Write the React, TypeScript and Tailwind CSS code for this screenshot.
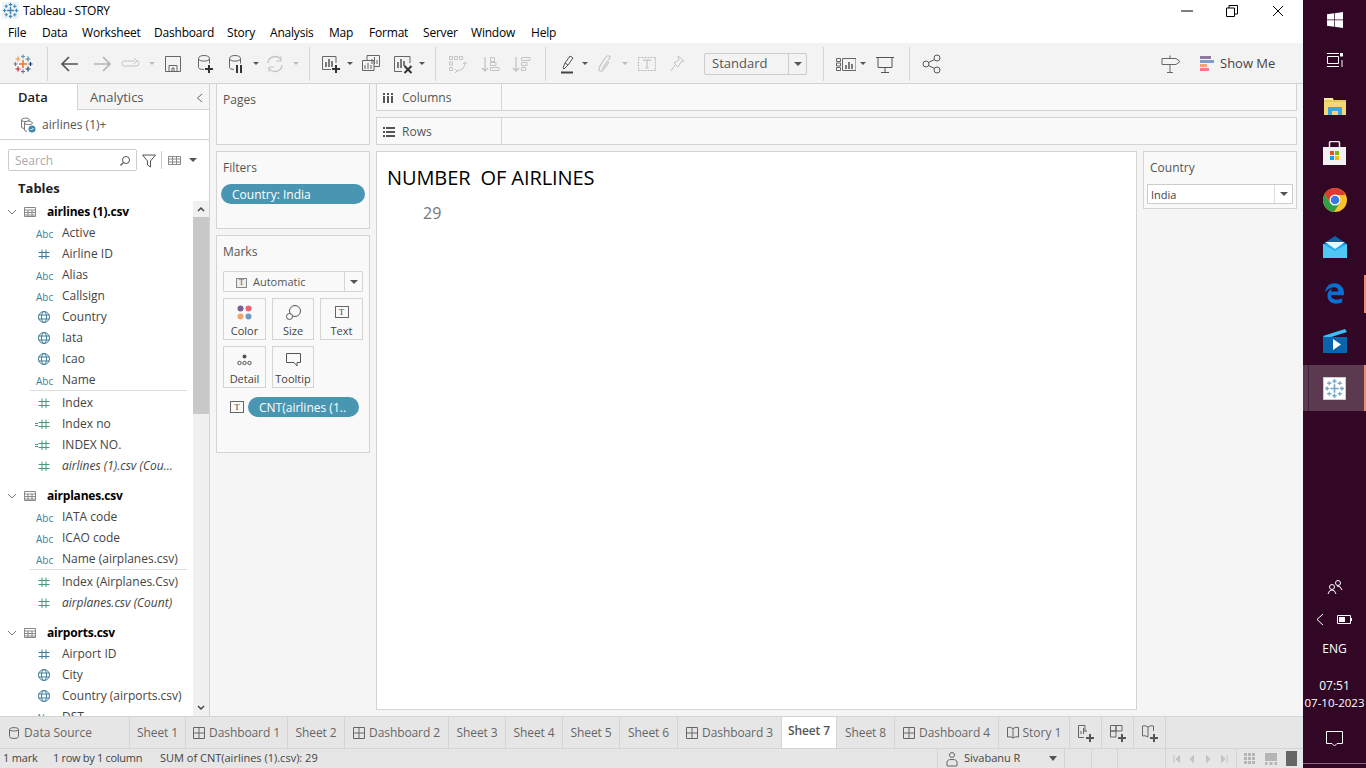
import React from "react";
import { FaEdgeLegacy } from "react-icons/fa";

type IcoProps = {
  className?: string;
  children: React.ReactNode;
  s?: number;
};

function Ico({ className, children, s = 20 }: IcoProps) {
  return (
    <svg
      width={s}
      height={s}
      viewBox={`0 0 ${s} ${s}`}
      fill="none"
      className={`shrink-0 ${className ?? ""}`}
    >
      {children}
    </svg>
  );
}

function Caret({ className, dark }: { className?: string; dark?: boolean }) {
  return (
    <span
      className={`w-0 h-0 shrink-0 border-x-[3px] border-x-transparent border-t-[3px] ${
        dark ? "border-t-[#555]" : "border-t-[#bbb]"
      } ${className ?? ""}`}
    />
  );
}

function Sep({ className }: { className?: string }) {
  return <div className={`w-px h-[34px] bg-[#d4d4d4] shrink-0 ${className ?? ""}`} />;
}

function Cross({ x, y, r, c, w = 1.2 }: { x: number; y: number; r: number; c: string; w?: number }) {
  return <path d={`M${x - r} ${y}H${x + r}M${x} ${y - r}V${y + r}`} stroke={c} strokeWidth={w} />;
}

function Hash({ color, calc }: { color: string; calc?: boolean }) {
  return (
    <svg width="16" height="12" viewBox="0 0 16 12" fill="none">
      <path d="M7 1.5V11M11 1.5V11M3.5 4.5H14.5M3.5 8.5H14.5" stroke={color} />
      {calc && <path d="M0 5.5H3M0 7.5H3" stroke={color} />}
    </svg>
  );
}

function Globe() {
  return (
    <svg width="14" height="14" viewBox="0 0 14 14" fill="none" stroke="#3f7f9b">
      <circle cx="7" cy="7" r="5.5" />
      <ellipse cx="7" cy="7" rx="2.5" ry="5.5" />
      <path d="M1.5 5H12.5M1.5 9H12.5" />
    </svg>
  );
}

function TIcon({ className, s = 14 }: { className?: string; s?: number }) {
  return (
    <span
      className={`shrink-0 flex items-center justify-center border border-[#666] text-[9px] leading-none font-['Liberation_Serif',serif] text-[#444] ${className ?? ""}`}
      style={{ width: s, height: s - 2 }}
    >
      T
    </span>
  );
}

type Field = { t: "abc" | "num" | "geo" | "meas" | "calc"; n: string; i?: boolean };

function FieldRow({ t, n, i }: Field) {
  return (
    <div className="h-[21px] flex items-center">
      <div className="w-[62px] pl-[36px] flex items-center">
        {t === "abc" && <span className="text-[10px] pt-[3px] font-medium text-[#3f7f9b] w-[17px] text-center">Abc</span>}
        {t === "num" && <span className="ml-[-1px]"><Hash color="#3a7a96" /></span>}
        {t === "geo" && <span className="ml-[1px]"><Globe /></span>}
        {t === "meas" && <span className="ml-[-1px]"><Hash color="#3f9c80" /></span>}
        {t === "calc" && <span className="ml-[-1px]"><Hash color="#3f9c80" calc /></span>}
      </div>
      <span className={`text-[12px] pt-[1px] whitespace-nowrap text-[#444] ${i ? "italic" : ""}`}>{n}</span>
    </div>
  );
}

function TableHead({ n }: { n: string }) {
  return (
    <div className="h-[21px] flex items-center">
      <svg width="10" height="6" viewBox="0 0 10 6" fill="none" className="ml-[7px]">
        <path d="M1 1L5 5L9 1" stroke="#777" />
      </svg>
      <svg width="12" height="10" viewBox="0 0 12 10" fill="none" stroke="#888" className="ml-[7px]">
        <path d="M.5.5H11.5V9.5H.5ZM.5 3H11.5M.5 5.5H11.5M.5 8H11.5M4 3V9.5M8 3V9.5" />
      </svg>
      <span className="ml-[11px] text-[12px] pt-[1px] font-bold tracking-[-0.2px] text-black whitespace-nowrap">{n}</span>
    </div>
  );
}

const airlinesDims: Field[] = [
  { t: "abc", n: "Active" },
  { t: "num", n: "Airline ID" },
  { t: "abc", n: "Alias" },
  { t: "abc", n: "Callsign" },
  { t: "geo", n: "Country" },
  { t: "geo", n: "Iata" },
  { t: "geo", n: "Icao" },
  { t: "abc", n: "Name" },
];
const airlinesMeas: Field[] = [
  { t: "meas", n: "Index" },
  { t: "calc", n: "Index no" },
  { t: "calc", n: "INDEX NO." },
  { t: "meas", n: "airlines (1).csv (Cou...", i: true },
];
const planesDims: Field[] = [
  { t: "abc", n: "IATA code" },
  { t: "abc", n: "ICAO code" },
  { t: "abc", n: "Name (airplanes.csv)" },
];
const planesMeas: Field[] = [
  { t: "meas", n: "Index (Airplanes.Csv)" },
  { t: "meas", n: "airplanes.csv (Count)", i: true },
];
const airportsDims: Field[] = [
  { t: "num", n: "Airport ID" },
  { t: "geo", n: "City" },
  { t: "geo", n: "Country (airports.csv)" },
  { t: "abc", n: "DST" },
];

const menus = [
  { n: "File", w: "w-[34px]" },
  { n: "Data", w: "w-[40px]" },
  { n: "Worksheet", w: "w-[72px]" },
  { n: "Dashboard", w: "w-[73px]" },
  { n: "Story", w: "w-[43px]" },
  { n: "Analysis", w: "w-[59px]" },
  { n: "Map", w: "w-[40px]" },
  { n: "Format", w: "w-[54px]" },
  { n: "Server", w: "w-[48px]" },
  { n: "Window", w: "w-[60px]" },
  { n: "Help", w: "w-[40px]" },
];

function DashIcon() {
  return (
    <svg width="12" height="12" viewBox="0 0 12 12" fill="none" stroke="#666" className="mr-[4px] shrink-0">
      <path d="M.5.5H11.5V11.5H.5ZM6 .5V11.5M.5 6H11.5" />
    </svg>
  );
}

const tabs = [
  { n: "Sheet 1", w: "w-[56px]" },
  { n: "Dashboard 1", w: "w-[102px]", d: true },
  { n: "Sheet 2", w: "w-[57px]" },
  { n: "Dashboard 2", w: "w-[104px]", d: true },
  { n: "Sheet 3", w: "w-[57px]" },
  { n: "Sheet 4", w: "w-[57px]" },
  { n: "Sheet 5", w: "w-[57px]" },
  { n: "Sheet 6", w: "w-[58px]" },
  { n: "Dashboard 3", w: "w-[104px]", d: true },
  { n: "Sheet 7", w: "w-[55px]", on: true },
  { n: "Sheet 8", w: "w-[58px]" },
  { n: "Dashboard 4", w: "w-[104px]", d: true },
];

function Tableau({ c = "#3f86b5" }: { c?: string }) {
  return (
    <>
      <Cross x={10} y={10} r={4} c={c} w={1.6} />
      <Cross x={10} y={3} r={2} c={c} w={1.4} />
      <Cross x={10} y={17} r={2} c={c} w={1.4} />
      <Cross x={3} y={10} r={2} c={c} w={1.4} />
      <Cross x={17} y={10} r={2} c={c} w={1.4} />
      <Cross x={5} y={5} r={2} c={c} w={1.2} />
      <Cross x={15} y={5} r={2} c={c} w={1.2} />
      <Cross x={5} y={15} r={2} c={c} w={1.2} />
      <Cross x={15} y={15} r={2} c={c} w={1.2} />
    </>
  );
}

function Toolbar() {
  return (
    <div className="h-[42px] pt-[1px] bg-[#f3f3f3] border-b border-[#d4d4d4] flex items-center">
      <Ico className="ml-[13px]">
        <Cross x={10} y={10} r={4} c="#e8762d" w={1.5} />
        <Cross x={10} y={2.5} r={2} c="#5b9bb5" />
        <Cross x={10} y={17.5} r={2} c="#6f6fa8" />
        <Cross x={2.500} y={10} r={2} c="#5b879b" />
        <Cross x={17.500} y={10} r={2} c="#1f447a" />
        <Cross x={5} y={5} r={2.500} c="#eb9a4f" />
        <Cross x={15} y={5} r={2.500} c="#5b879b" />
        <Cross x={5} y={15} r={2.500} c="#c72035" />
        <Cross x={15} y={15} r={2.500} c="#1f447a" />
      </Ico>
      <Sep className="ml-[14px]" />
      <Ico className="ml-[12px]">
        <path d="M2 10H18M9 3L2 10L9 17" stroke="#555" strokeWidth="1.7" />
      </Ico>
      <Ico className="ml-[12px]">
        <path d="M2 10H18M11 3L18 10L11 17" stroke="#b5b5b5" strokeWidth="1.7" />
      </Ico>
      <Ico className="ml-[9px]">
        <path d="M14 7H3Q1 7 1 9.500Q1 12 3 12H15Q18 12 18 9.500Q18 7 16 7M13 4L16 7L13 10" stroke="#c4c4c4" />
      </Ico>
      <Caret className="ml-[8px]" />
      <Ico className="ml-[8px]">
        <path d="M2.500 2.500H17.500V17.500H2.500ZM6 17.500V11.500H14V17.500M9 14H11V17.500H9Z" stroke="#666" />
      </Ico>
      <Ico className="ml-[12px]">
        <path d="M3.500 4.500V13.500Q3.500 15.500 9 15.500M14.500 4.500V9.500M3.500 4.500C3.500 .5 14.500 .5 14.500 4.500C14.500 8 3.500 8 3.500 4.500Z" stroke="#666" />
        <path d="M10 15H18M14 11V19" stroke="#333" strokeWidth="2" />
      </Ico>
      <Ico className="ml-[11px]">
        <path d="M3.500 4.500V13.500Q3.500 15.500 8 15.500M14.500 4.500V9.500M3.500 4.500C3.500 .5 14.500 .5 14.500 4.500C14.500 8 3.500 8 3.500 4.500Z" stroke="#666" />
        <path d="M11 11V19M15 11V19" stroke="#333" strokeWidth="2" />
      </Ico>
      <Caret className="ml-[7px]" dark />
      <Ico className="ml-[6px]">
        <path d="M3 9A7 7 0 0 1 16 6M17 11A7 7 0 0 1 4 14" stroke="#c4c4c4" strokeWidth="1.300" />
        <path d="M16 2V7H11M4 18V13H9" stroke="#c4c4c4" />
      </Ico>
      <Caret className="ml-[8px]" />
      <Sep className="ml-[10px]" />
      <Ico className="ml-[11px]">
        <path d="M15 9V2.500H1.500V15.500H10" stroke="#666" />
        <path d="M5 8V13M8 5V13M11 7V13" stroke="#555" strokeWidth="1.500" />
        <path d="M11 15H19M15 11V19" stroke="#333" strokeWidth="2" />
      </Ico>
      <Caret className="ml-[6px]" dark />
      <Ico className="ml-[8px]">
        <path d="M6 6V1.500H18.500V12.500H13" stroke="#666" />
        <path d="M1.500 6.500H13V16.500H1.500Z" fill="#f3f3f3" stroke="#666" />
        <path d="M11 5V10M13.500 3V10M16 6V10M4 11V15M7 9V15M10 11V15" stroke="#666" />
      </Ico>
      <Ico className="ml-[12px]">
        <path d="M17 9V2.500H1.500V17.500H9" stroke="#666" />
        <path d="M5 8V14M8 5V14M11 7V12" stroke="#555" strokeWidth="1.500" />
        <path d="M11.500 12L18.500 19M18.500 12L11.500 19" stroke="#333" strokeWidth="2" />
      </Ico>
      <Caret className="ml-[6px]" dark />
      <Sep className="ml-[10px]" />
      <Ico className="ml-[11px]">
        <path d="M2.500 2.500H5.500V5.500H2.500ZM7.500 2.500H10.500V5.500H7.500ZM12.500 2.500H15.500V5.500H12.500ZM2.500 8H5.500V11H2.500ZM2.500 13.500H5.500V16.500H2.500Z" stroke="#c4c4c4" />
        <path d="M18 8Q18 16 10 17M8 15L10 17L8 19M16 10L18 8L20 10" stroke="#c4c4c4" />
      </Ico>
      <Ico className="ml-[13px]">
        <path d="M5 3V17M2 14L5 17L8 14" stroke="#c4c4c4" strokeWidth="1.300" />
        <path d="M10.500 3.500H14.500V7.500H10.500ZM10.500 8.500H16V11.500H10.500ZM10.500 13.500H19V16.500H10.500Z" stroke="#c4c4c4" />
      </Ico>
      <Ico className="ml-[11px]">
        <path d="M5 3V17M2 14L5 17L8 14" stroke="#c4c4c4" strokeWidth="1.300" />
        <path d="M10.500 3.500H19V6.500H10.500ZM10.500 8.500H16V11.500H10.500ZM10.500 13.500H14.500V16.500H10.500Z" stroke="#c4c4c4" />
      </Ico>
      <Sep className="ml-[14px]" />
      <Ico className="ml-[12px]">
        <path d="M5 14L7 9L12 2L15 4L10 11L6 15ZM7 9L10 11" stroke="#555" />
        <path d="M3 18.500H15" stroke="#444" strokeWidth="2" />
      </Ico>
      <Caret className="ml-[4px]" dark />
      <Ico className="ml-[7px]">
        <path d="M7 15L14 5Q16 2 14 2Q12 1 10 4L5 12Q3 16 5 17Q7 18 9 15L14 8" stroke="#c4c4c4" strokeWidth="1.200" />
      </Ico>
      <Caret className="ml-[7px]" />
      <Ico className="ml-[9px]">
        <path d="M1.500 3.500H18.500V16.500H1.500Z" stroke="#bbb" strokeDasharray="2 1" />
        <path d="M6.500 7V6H13.500V7M10 6V14M8.500 14H11.500" stroke="#bbb" />
      </Ico>
      <Ico className="ml-[10px]">
        <path d="M11 2L17 7L14 8L11 13L7 9L12 6ZM8 11L4 17" stroke="#c4c4c4" />
      </Ico>
      <div className="ml-[17px] w-[103px] h-[22px] border border-[#ccc] rounded-[2px] flex items-center shrink-0">
        <span className="flex-1 pl-[7px] text-[13px] text-[#555]">Standard</span>
        <span className="w-[18px] h-full border-l border-[#ccc] flex items-center justify-center">
          <Caret className="border-x-[4px] border-t-[4px]" dark />
        </span>
      </div>
      <Sep className="ml-[16px]" />
      <Ico className="ml-[12px]">
        <path d="M.5 4.500H4.500V7.500H.5ZM.5 9H4.500V12H.5ZM.5 13.500H4.500V16.500H.5ZM6.500 4.500H20V16.500H6.500Z" stroke="#666" />
        <path d="M10 11V15M13 8V15M16 10V15" stroke="#555" strokeWidth="1.500" />
      </Ico>
      <Caret className="ml-[4px]" dark />
      <Ico className="ml-[9px]">
        <path d="M1 3.500H19M3 3.500V13.500H17V3.500M10 13.500V18M6 18.500H14" stroke="#555" />
      </Ico>
      <Sep className="ml-[14px]" />
      <Ico className="ml-[12px]">
        <circle cx="4" cy="10" r="3" stroke="#555" />
        <circle cx="15" cy="4" r="3" stroke="#555" />
        <circle cx="15" cy="16" r="3" stroke="#555" />
        <path d="M6.500 8.500L12.500 5.500M6.500 11.500L12.500 14.500" stroke="#555" />
      </Ico>
      <Ico className="ml-[219px]" s={20}>
        <path d="M1 4.500H15L19 7.500L15 10.500H1ZM9 1.500V4.500M9 10.500V18M6 18.500H12" stroke="#666" />
      </Ico>
      <div className="ml-[19px] flex flex-col gap-[1px] shrink-0">
        <span className="w-[11px] h-[3px] bg-[#8d7aa3]" />
        <span className="w-[14px] h-[3px] bg-[#7b9fc9]" />
        <span className="w-[7px] h-[3px] bg-[#f4a46c]" />
        <span className="w-[9px] h-[3px] bg-[#f27a85]" />
      </div>
      <span className="ml-[6px] text-[13px] text-[#444] whitespace-nowrap">Show Me</span>
    </div>
  );
}

function LeftPanel() {
  return (
    <div className="w-[210px] shrink-0 bg-white border-r border-[#d4d4d4] flex flex-col h-full">
      <div className="h-[26px] flex shrink-0">
        <div className="w-[77px] flex items-center pl-[18px] pt-[2px] text-[13px] font-semibold text-[#222]">Data</div>
        <div className="flex-1 flex items-center bg-[#f5f5f5] border-l border-b border-[#d4d4d4] pl-[12px] pt-[2px] text-[13px] text-[#555]">
          Analytics
          <svg width="7" height="10" viewBox="0 0 7 10" fill="none" className="ml-auto mr-[6px]">
            <path d="M6 1L1.500 5L6 9" stroke="#666" />
          </svg>
        </div>
      </div>
      <div className="h-[30px] shrink-0 border-b border-[#d4d4d4] flex items-center pl-[20px] text-[12px] text-[#555]">
        <svg width="16" height="16" viewBox="0 0 16 16" fill="none" className="mr-[6px]">
          <path d="M1.500 3V10Q1.500 11 4 11.500M1.500 3C1.500 .5 9.500 .5 9.500 3C9.500 5 1.500 5 1.500 3Z" stroke="#777" />
          <path d="M4.500 6V13Q4.500 14 7 14.500M4.500 6C4.500 3.500 12.500 3.500 12.500 6C12.500 8 4.500 8 4.500 6Z" stroke="#777" fill="#fff" />
          <circle cx="12" cy="12" r="3.500" fill="#3f8bb0" />
          <path d="M10.500 12L11.500 13L13.500 11" stroke="#fff" />
        </svg>
        airlines (1)+
      </div>
      <div className="h-[35px] shrink-0 flex items-end pb-[4px] pl-[8px]">
        <div className="w-[129px] h-[22px] border border-[#ccc] rounded-[2px] flex items-center pl-[6px] pt-[1px] text-[12px] text-[#aaa]">
          Search
          <svg width="12" height="12" viewBox="0 0 12 12" fill="none" className="ml-auto mr-[5px]">
            <circle cx="7" cy="5" r="3.500" stroke="#555" />
            <path d="M4.500 7.500L1.500 10.500" stroke="#555" strokeWidth="1.300" />
          </svg>
        </div>
        <svg width="14" height="14" viewBox="0 0 14 14" fill="none" className="ml-[5px] mb-[3px]">
          <path d="M.5 1H13.500L8.500 7V13L5.500 11V7Z" stroke="#555" />
        </svg>
        <span className="w-px h-[18px] bg-[#ccc] ml-[5px] mb-[2px]" />
        <svg width="13" height="9" viewBox="0 0 13 9" fill="none" className="ml-[6px] mb-[6px]">
          <path d="M.5.5H12.500V8.500H.5ZM.5 3H12.500M.5 6H12.500M4.500.5V8.500M8.500.5V8.500" stroke="#888" />
        </svg>
        <Caret className="ml-[8px] mb-[9px] border-x-[4px] border-t-[4px]" dark />
      </div>
      <div className="h-[26px] shrink-0 flex items-center pl-[18px] pt-[2px] text-[13px] font-bold text-[#222]">Tables</div>
      <div className="flex-1 min-h-0 flex">
        <div className="w-[193px] overflow-hidden">
          <TableHead n="airlines (1).csv" />
          {airlinesDims.map((f) => <FieldRow key={f.n} {...f} />)}
          <div className="h-[2px] ml-[30px] mr-[6px] border-t border-[#ddd]" />
          {airlinesMeas.map((f) => <FieldRow key={f.n} {...f} />)}
          <div className="h-[9px]" />
          <TableHead n="airplanes.csv" />
          {planesDims.map((f) => <FieldRow key={f.n} {...f} />)}
          <div className="h-[2px] ml-[30px] mr-[6px] border-t border-[#ddd]" />
          {planesMeas.map((f) => <FieldRow key={f.n} {...f} />)}
          <div className="h-[9px]" />
          <TableHead n="airports.csv" />
          {airportsDims.map((f) => <FieldRow key={f.n} {...f} />)}
        </div>
        <div className="w-[16px] bg-[#f0f0f0] flex flex-col">
          <div className="h-[16px] flex items-center justify-center">
            <svg width="8" height="6" viewBox="0 0 8 6" fill="none"><path d="M1 5L4 2L7 5" stroke="#444" strokeWidth="1.500" /></svg>
          </div>
          <div className="h-[197px] bg-[#c8c8c8]" />
          <div className="mt-auto h-[16px] flex items-center justify-center">
            <svg width="8" height="6" viewBox="0 0 8 6" fill="none"><path d="M1 1L4 4L7 1" stroke="#444" strokeWidth="1.500" /></svg>
          </div>
        </div>
      </div>
    </div>
  );
}

function MarkBtn({ label, children }: { label: string; children: React.ReactNode }) {
  return (
    <div className="h-[42px] border border-[#d4d4d4] flex flex-col items-center pt-[5px]">
      <div className="h-[17px] flex items-center justify-center">{children}</div>
      <span className="text-[11px] leading-[16px] mt-[3px] text-[#444]">{label}</span>
    </div>
  );
}

function Cards() {
  return (
    <div className="w-[154px] shrink-0 flex flex-col gap-[6px] h-full">
      <div className="h-[61px] border border-t-0 border-[#d4d4d4] bg-[#f9f9f9] px-[6px] pt-[7px] text-[12px] text-[#555]">Pages</div>
      <div className="h-[78px] border border-[#d4d4d4] bg-[#f9f9f9] px-[4px]">
        <div className="pl-[2px] pt-[7px] h-[32px] text-[12px] text-[#555]">Filters</div>
        <div className="h-[20px] w-[144px] rounded-full bg-[#4996b2] text-white text-[12px] pt-[1px] flex items-center pl-[11px]">Country: India</div>
      </div>
      <div className="h-[218px] border border-[#d4d4d4] bg-[#f9f9f9] px-[6px]">
        <div className="pt-[7px] h-[35px] text-[12px] text-[#555]">Marks</div>
        <div className="h-[21px] w-[140px] border border-[#d4d4d4] rounded-[1px] flex items-center">
          <span className="flex-1 flex items-center pl-[12px] pt-[2px] text-[11px] text-[#555]">
            <span className="w-[11px] h-[10px] border border-[#888] bg-[#eee] text-[8px] leading-[8px] text-center font-['Liberation_Serif',serif] mr-[6px]">T</span>
            Automatic
          </span>
          <span className="w-[18px] h-full border-l border-[#d4d4d4] flex items-center justify-center">
            <Caret className="border-x-[4px] border-t-[4px]" dark />
          </span>
        </div>
        <div className="grid grid-cols-[43px_42px_43px] gap-x-[6px] gap-y-[6px] mt-[6px] w-[140px]">
          <MarkBtn label="Color">
            <svg width="15" height="15" viewBox="0 0 15 15">
              <circle cx="3.500" cy="3.500" r="3" fill="#7b5f93" />
              <circle cx="11.500" cy="3.500" r="3" fill="#f0616f" />
              <circle cx="3.500" cy="11.500" r="3" fill="#f4a46c" />
              <circle cx="11.500" cy="11.500" r="3" fill="#7299c6" />
            </svg>
          </MarkBtn>
          <MarkBtn label="Size">
            <svg width="15" height="15" viewBox="0 0 15 15" fill="none" stroke="#555">
              <circle cx="9" cy="6" r="5.500" />
              <circle cx="3.500" cy="11.500" r="3" fill="#f9f9f9" />
            </svg>
          </MarkBtn>
          <MarkBtn label="Text">
            <TIcon s={14} />
          </MarkBtn>
          <MarkBtn label="Detail">
            <svg width="15" height="12" viewBox="0 0 15 12" fill="none">
              <circle cx="7.500" cy="2.500" r="2" fill="#555" />
              <circle cx="2.500" cy="9" r="1.700" stroke="#555" />
              <circle cx="7.500" cy="9" r="1.700" stroke="#555" />
              <circle cx="12.500" cy="9" r="1.700" stroke="#555" />
            </svg>
          </MarkBtn>
          <MarkBtn label="Tooltip">
            <svg width="15" height="14" viewBox="0 0 15 14" fill="none">
              <path d="M.5.5H14.500V9.500H11V13L8 9.500H.5Z" stroke="#555" />
            </svg>
          </MarkBtn>
        </div>
        <div className="flex items-center mt-[9px]">
          <TIcon className="ml-[7px]" s={14} />
          <div className="ml-[4px] w-[111px] h-[20px] rounded-full bg-[#4996b2] text-white text-[12px] pt-[1px] flex items-center pl-[11px] whitespace-nowrap">CNT(airlines (1..</div>
        </div>
      </div>
    </div>
  );
}

function Shelf({ label, icon, h, top }: { label: string; icon: React.ReactNode; h: string; top?: boolean }) {
  return (
    <div className={`${h} shrink-0 border border-[#d4d4d4] bg-[#f9f9f9] flex ${top ? "border-t-0" : ""}`}>
      <div className="w-[125px] border-r border-[#d4d4d4] flex items-center pl-[6px] pt-[1px] text-[12px] text-[#555]">
        <span className="w-[19px] flex items-center">{icon}</span>
        {label}
      </div>
    </div>
  );
}

function Tabs() {
  return (
    <div className="h-[32px] shrink-0 bg-[#e6e6e6] border-t border-[#d4d4d4] flex text-[12px] text-[#666]">
      <div className="w-[130px] border-r border-[#d4d4d4] flex items-center pl-[9px]">
        <svg width="10" height="12" viewBox="0 0 10 12" fill="none" stroke="#666" className="mr-[5px]">
          <path d="M.5 2.500V9.500Q.5 11.500 5 11.500Q9.500 11.500 9.500 9.500V2.500C9.500 0 .5 0 .5 2.500C.5 4.500 9.500 4.500 9.500 2.500" />
        </svg>
        Data Source
      </div>
      {tabs.map((t) => (
        <div
          key={t.n}
          className={`${t.w} shrink-0 border-r border-[#d4d4d4] flex items-center justify-center whitespace-nowrap tracking-[-0.1px] ${
            t.on ? "bg-white font-semibold text-[#555] pb-[3px]" : ""
          }`}
        >
          {t.d && <DashIcon />}
          {t.n}
        </div>
      ))}
      <div className="w-[71px] shrink-0 border-r border-[#d4d4d4] flex items-center justify-center whitespace-nowrap">
        <svg width="12" height="13" viewBox="0 0 12 13" fill="none" stroke="#666" className="mr-[4px]">
          <path d="M6 2.500Q3 .5.5 1.500V11Q3 10 6 12Q9 10 11.500 11V1.500Q9 .5 6 2.500ZM6 2.500V12" />
        </svg>
        Story 1
      </div>
      {[
        "M8 8V1.500H1.500V13.500H7M4 10V7M6.500 10V4M9 8V6",
        "M7 1.500H13V7H7ZM1.500 1.500H7V7H1.500ZM1.500 7H7V13H1.500Z",
        "M7 3Q4 1 1.500 2V12Q4 11 7 13M7 3Q10 1 12.500 2V7M7 3V13",
      ].map((d) => (
        <div key={d} className="w-[32px] shrink-0 border-r border-[#d4d4d4] flex items-center justify-center">
          <svg width="18" height="18" viewBox="0 0 18 18" fill="none">
            <path d={d} stroke="#666" />
            <path d="M9 14H17M13 10V18" stroke="#555" strokeWidth="2" />
          </svg>
        </div>
      ))}
    </div>
  );
}

function StatusBar() {
  return (
    <div className="h-[20px] shrink-0 bg-[#e6e6e6] border-t border-[#d4d4d4] flex items-center text-[11px] text-[#444]">
      <span className="ml-[3px] w-[50px] tracking-[-0.2px]">1 mark</span>
      <span className="w-[107px] tracking-[-0.3px]">1 row by 1 column</span>
      <span className="w-[777px] whitespace-nowrap">SUM of CNT(airlines (1).csv): 29</span>
      <div className="h-full w-[127px] border-l border-[#d4d4d4] flex items-center">
        <svg width="12" height="16" viewBox="0 0 12 16" fill="none" stroke="#666" className="ml-[8px]">
          <circle cx="6" cy="4" r="2.500" />
          <path d="M1 15V11Q1 8.500 6 8.500Q11 8.500 11 11V15Z" />
        </svg>
        <span className="ml-[6px] flex-1">Sivabanu R</span>
        <Caret className="border-x-[4px] border-t-[5px] border-t-[#111] mr-[7px]" dark />
      </div>
      <div className="h-full w-[27px] border-l border-[#d4d4d4]" />
      <div className="h-full w-[26px] border-l border-[#d4d4d4]" />
      <div className="h-full w-[48px] border-l border-[#d4d4d4]" />
      <div className="h-full w-[71px] border-l border-[#d4d4d4] flex items-center pl-[7px] gap-[9px]">
        {["M1 1V9M7 1L3 5L7 9", "M5 1L1 5L5 9", "M1 1L5 5L1 9", "M6 1V9M0 1L4 5L0 9"].map((d) => (
          <svg key={d} width="7" height="10" viewBox="0 0 7 10"><path d={d} stroke="#c4c4c4" fill="#c4c4c4" /></svg>
        ))}
      </div>
      <div className="h-full flex-1 border-l border-[#d4d4d4] flex items-center pl-[7px] gap-[9px]">
        <svg width="12" height="12" viewBox="0 0 12 12" fill="#b5b5b5">
          <path d="M0 0H3V3H0ZM4 0H7V3H4ZM8 0H11V3H8ZM0 4H3V7H0ZM4 4H7V7H4ZM8 4H11V7H8ZM0 8H3V11H0ZM4 8H7V11H4ZM8 8H11V11H8Z" />
        </svg>
        <svg width="12" height="12" viewBox="0 0 12 12" fill="#b5b5b5"><path d="M0 0H12V8H0ZM0 9H2.500V12H0ZM4.500 9H7.500V12H4.500ZM9.500 9H12V12H9.500Z" /></svg>
        <span className="w-[11px] h-[15px] bg-[#666]" />
      </div>
    </div>
  );
}

function Taskbar() {
  return (
    <div className="w-[63px] shrink-0 h-full bg-[#310725] flex flex-col items-stretch text-white">
      <div className="h-[40px] flex items-center justify-center">
        <svg width="16" height="16" viewBox="0 0 16 16" fill="#fff">
          <path d="M0 2.300L7 1.300V7.600H0ZM7.700 1.200L16 0V7.600H7.700ZM0 8.300H7V14.700L0 13.700ZM7.700 8.300H16V16L7.700 14.800Z" />
        </svg>
      </div>
      <div className="h-[39px] flex items-center justify-center">
        <svg width="16" height="16" viewBox="0 0 16 16" fill="none" stroke="#fff">
          <path d="M.5 4.500H11.500V11.500H.5ZM0 1.500H12M0 14.500H12M15 8V15" />
          <path d="M13 1H16V4.500H13Z" fill="#fff" stroke="none" />
        </svg>
      </div>
      <div className="mt-[3px] h-[47px] flex items-center justify-center">
        <svg width="22" height="18" viewBox="0 0 22 18">
          <path d="M0 1H8L10 3H22V18H0Z" fill="#f5d67a" />
          <path d="M0 3H9V1H0Z" fill="#fbeaa8" />
          <path d="M4 18V10H18V18H14V14H8V18Z" fill="#39a8e0" />
          <path d="M0 4H22" stroke="#d9b65a" />
        </svg>
      </div>
      <div className="h-[47px] flex items-center justify-center">
        <svg width="23" height="24" viewBox="0 0 23 24" fill="none">
          <path d="M0 6H23V24H0Z" fill="#f2f2f2" />
          <path d="M6.500 6V2Q6.500 .5 8 .5H15Q16.500 .5 16.500 2V6" stroke="#e8e8e8" strokeWidth="1.500" />
          <path d="M7 10H11V14H7Z" fill="#f25022" />
          <path d="M12 10H16V14H12Z" fill="#7fba00" />
          <path d="M7 15H11V19H7Z" fill="#00a4ef" />
          <path d="M12 15H16V19H12Z" fill="#ffb900" />
        </svg>
      </div>
      <div className="h-[47px] flex items-center justify-center">
        <svg width="24" height="24" viewBox="0 0 24 24">
          <circle cx="12" cy="12" r="12" fill="#fbc02d" />
          <path d="M12 0A12 12 0 0 0 1.600 6L7 15L12 7H22.400A12 12 0 0 0 12 0Z" fill="#dd3b2f" />
          <path d="M1.600 6A12 12 0 0 0 11 24L16 16L7 15Z" fill="#2f9e44" />
          <circle cx="12" cy="12" r="5.500" fill="#fff" />
          <circle cx="12" cy="12" r="4.300" fill="#3b78e7" />
        </svg>
      </div>
      <div className="h-[47px] flex items-center justify-center">
        <svg width="24" height="22" viewBox="0 0 24 22">
          <path d="M0 8L12 0L24 8V22H0Z" fill="#0a64ad" />
          <path d="M0 8H24V22H0Z" fill="#28a8ea" />
          <path d="M0 8L12 15L24 8V22H0Z" fill="#50c8f5" />
          <path d="M2 6H22L12 13Z" fill="#e9f6fd" />
        </svg>
      </div>
      <div className="h-[46px] relative flex items-center justify-center">
        <FaEdgeLegacy className="w-[21px] h-[21px] text-[#0a6ed1]" />
        <span className="absolute right-0 top-[5px] w-[2px] h-[38px] bg-[#f28b6a]" />
      </div>
      <div className="h-[49px] flex items-center justify-center">
        <svg width="24" height="24" viewBox="0 0 24 24">
          <path d="M0 7L22 0L24 3L2 10Z" fill="#35c1f1" />
          <path d="M0 8H24V24H0Z" fill="#0a64ad" />
          <path d="M10 10L18 15.500L10 21Z" fill="#fff" />
        </svg>
      </div>
      <div className="h-[46px] relative bg-[#5b3a50] flex items-center justify-center">
        <span className="absolute left-[5px] top-0 w-px h-full bg-[#3f2138]" />
        <span className="absolute right-0 top-0 w-[2px] h-full bg-[#f28b6a]" />
        <svg width="23" height="23" viewBox="0 0 20 20" className="bg-white border border-[#ccc]">
          <Tableau c="#7aa8c8" />
        </svg>
      </div>
      <div className="mt-[165px] h-[22px] flex items-center justify-center">
        <svg width="16" height="16" viewBox="0 0 16 16" fill="none" stroke="#fff">
          <circle cx="5" cy="8" r="2.500" />
          <circle cx="11" cy="4" r="2.500" />
          <path d="M1 15Q2 11 5 11Q8 11 9 15M10 7Q14 7 15 11" />
        </svg>
      </div>
      <div className="mt-[10px] h-[22px] flex items-center">
        <svg width="8" height="13" viewBox="0 0 8 13" fill="none" className="ml-[13px]">
          <path d="M7 1L1 6.500L7 12" stroke="#fff" />
        </svg>
        <svg width="15" height="9" viewBox="0 0 15 9" fill="none" className="ml-[13px]">
          <path d="M.5.5H13.500V8.500H.5Z" stroke="#fff" />
          <path d="M2 2H8V7H2ZM14 3H15V6H14Z" fill="#fff" />
        </svg>
      </div>
      <div className="mt-[9px] text-center text-[12px] leading-[20px]">ENG</div>
      <div className="mt-[18px] text-center text-[12px] leading-[17px]">07:51</div>
      <div className="text-center text-[11.500px] leading-[17px] whitespace-nowrap">07-10-2023</div>
      <div className="mt-[20px] flex justify-center">
        <svg width="17" height="16" viewBox="0 0 17 16" fill="none">
          <path d="M.5.5H16.500V12.500H11L8.500 15L6 12.500H.5Z" stroke="#fff" />
        </svg>
      </div>
      <div className="mt-[16px] h-px bg-[#8a6a80]" />
    </div>
  );
}

export default function App() {
  return (
    <div className="w-[1366px] h-[768px] overflow-hidden flex font-['Open_Sans',sans-serif] bg-white">
      <div className="w-[1303px] shrink-0 flex flex-col h-full">
        <div className="h-[21px] shrink-0 flex items-center">
          <svg width="17" height="17" viewBox="0 0 20 20" className="ml-[2px] bg-[#eef3f7]">
            <Tableau />
          </svg>
          <span className="ml-[4px] w-[92px] text-[12px] tracking-[-0.3px] text-black whitespace-nowrap">Tableau - STORY</span>
          <svg width="14" height="14" viewBox="0 0 14 14" fill="none" className="ml-[1066px]">
            <path d="M0 7H12" stroke="#000" />
          </svg>
          <svg width="12" height="12" viewBox="0 0 12 12" fill="none" stroke="#000" className="ml-[31px]">
            <path d="M.5 3H8.500V11.500H.5ZM3 3V.5H11.500V9H8.500" />
          </svg>
          <svg width="12" height="12" viewBox="0 0 12 12" fill="none" stroke="#000" className="ml-[34px]">
            <path d="M1 1L11 11M11 1L1 11" />
          </svg>
        </div>
        <div className="h-[22px] shrink-0 flex items-center pl-[8px] pt-[2px] text-[12px] tracking-[-0.2px] text-black">
          {menus.map((m) => (
            <span key={m.n} className={`${m.w} shrink-0`}>{m.n}</span>
          ))}
        </div>
        <Toolbar />
        <div className="h-[632px] shrink-0 flex bg-[#f5f5f5]">
          <LeftPanel />
          <div className="flex-1 flex pl-[6px] gap-[6px] pr-[6px] min-w-0">
            <Cards />
            <div className="flex-1 flex flex-col min-w-0">
              <Shelf
                top
                h="h-[27px]"
                label="Columns"
                icon={
                  <svg width="11" height="10" viewBox="0 0 11 10" fill="#555">
                    <path d="M0 0H2V2H0ZM0 3H2V10H0ZM4 0H6V2H4ZM4 3H6V10H4ZM8 0H10V2H8ZM8 3H10V10H8Z" />
                  </svg>
                }
              />
              <div className="h-[6px] shrink-0" />
              <Shelf
                h="h-[28px]"
                label="Rows"
                icon={
                  <svg width="12" height="10" viewBox="0 0 12 10" fill="#555">
                    <path d="M0 0H2V2H0ZM3 0H12V2H3ZM0 4H2V6H0ZM3 4H12V6H3ZM0 8H2V10H0ZM3 8H12V10H3Z" />
                  </svg>
                }
              />
              <div className="h-[6px] shrink-0" />
              <div className="flex gap-[6px] shrink-0">
                <div className="w-[761px] h-[559px] bg-white border border-[#d4d4d4] shrink-0 pl-[10px] pt-[12px]">
                  <div className="text-[20px] leading-[28px] font-medium tracking-[-0.1px] text-black whitespace-pre">NUMBER  OF AIRLINES</div>
                  <div className="mt-[11px] ml-[36px] text-[16px] leading-[20px] text-[#777]">29</div>
                </div>
                <div className="flex-1 h-[58px] border border-[#d4d4d4] bg-[#f9f9f9] px-[3px]">
                  <div className="h-[32px] pl-[3px] pt-[7px] text-[12px] text-[#555]">Country</div>
                  <div className="h-[20px] border border-[#ccc] bg-white flex items-center text-[11px] text-[#444]">
                    <span className="flex-1 pl-[3px] pt-[2px]">India</span>
                    <span className="w-[18px] h-full border-l border-[#ddd] flex items-center justify-center">
                      <Caret className="border-x-[4px] border-t-[4px] border-t-[#111]" dark />
                    </span>
                  </div>
                </div>
              </div>
            </div>
          </div>
        </div>
        <Tabs />
        <StatusBar />
      </div>
      <Taskbar />
    </div>
  );
}
